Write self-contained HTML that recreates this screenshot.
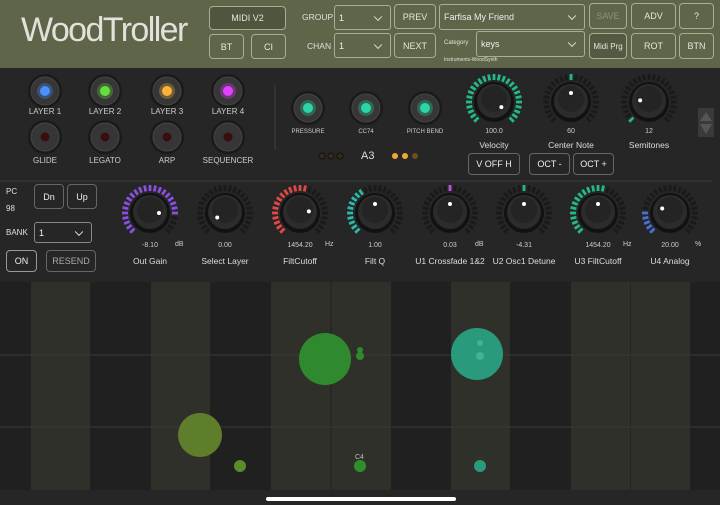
<!DOCTYPE html>
<html><head><meta charset="utf-8"><style>
*{box-sizing:border-box;margin:0;padding:0}
body{width:720px;height:505px;background:#262626;position:relative;overflow:hidden;font-family:"Liberation Sans",sans-serif;color:#ddd}
.a{position:absolute}
#hdr{left:0;top:0;width:720px;height:68px;background:#5e6549}
.b{position:absolute;border:1px solid #a9ae98;border-radius:4px;color:#e6e6dc;font-size:9px;display:flex;align-items:center;justify-content:center}
.s{position:absolute;border:1px solid #a9ae98;border-radius:3px;color:#eee;font-size:9px;display:flex;align-items:center;padding-left:4px}
.s:after{content:"";position:absolute;right:9px;top:50%;width:5px;height:5px;border-right:1.5px solid #ddd;border-bottom:1.5px solid #ddd;transform:translateY(-70%) rotate(45deg)}
.l{position:absolute;font-size:9px;color:#e0e0d8}
.t{position:absolute;font-size:7px;color:#ccc;text-align:center;width:80px;margin-left:-40px}
.n{position:absolute;font-size:8.5px;color:#ddd;text-align:center;width:90px;margin-left:-45px}
.db{position:absolute;border:1px solid #666;border-radius:4px;color:#eee;font-size:9px;display:flex;align-items:center;justify-content:center}
</style></head><body>
<div id="hdr" class="a">
<div class="a" style="left:21px;top:11px;font-size:34px;color:#e2e2da;letter-spacing:-1.6px;font-weight:100">WoodTroller</div>
<div class="b" style="left:209px;top:6px;width:77px;height:24px;background:#4f563d">MIDI V2</div>
<div class="b" style="left:209px;top:34px;width:35px;height:25px">BT</div>
<div class="b" style="left:251px;top:34px;width:35px;height:25px">CI</div>
<div class="l" style="left:302px;top:12px;font-size:8.5px">GROUP</div>
<div class="l" style="left:307px;top:41px;font-size:8.5px">CHAN</div>
<div class="s" style="left:334px;top:5px;width:57px;height:25px">1</div>
<div class="s" style="left:334px;top:33px;width:57px;height:25px">1</div>
<div class="b" style="left:394px;top:4px;width:42px;height:25px">PREV</div>
<div class="b" style="left:394px;top:33px;width:42px;height:25px">NEXT</div>
<div class="s" style="left:439px;top:4px;width:146px;height:26px">Farfisa My Friend</div>
<div class="l" style="left:444px;top:40px;font-size:6px">Category</div>
<div class="s" style="left:476px;top:31px;width:109px;height:26px">keys</div>
<div class="l" style="left:444px;top:57px;font-size:5px">Instruments-WoodSynth</div>
<div class="b" style="left:589px;top:3px;width:38px;height:26px;color:#8d927c">SAVE</div>
<div class="b" style="left:631px;top:3px;width:45px;height:26px">ADV</div>
<div class="b" style="left:679px;top:3px;width:35px;height:26px">?</div>
<div class="b" style="left:589px;top:33px;width:38px;height:26px;font-size:8px;background:#535a41">Midi Prg</div>
<div class="b" style="left:631px;top:33px;width:45px;height:26px">ROT</div>
<div class="b" style="left:679px;top:33px;width:35px;height:26px">BTN</div>
</div>
<svg class="a" style="left:0;top:0" width="720" height="505" id="sv"></svg>
<div id="txt"></div>
<div class="l" style="left:6px;top:187px;font-size:8px">PC</div>
<div class="l" style="left:6px;top:204px;font-size:8px">98</div>
<div class="db" style="left:34px;top:184px;width:30px;height:25px">Dn</div>
<div class="db" style="left:67px;top:184px;width:30px;height:25px">Up</div>
<div class="l" style="left:6px;top:228px;font-size:8px">BANK</div>
<div class="s" style="left:34px;top:222px;width:58px;height:21px;border-color:#888">1</div>
<div class="db" style="left:6px;top:250px;width:31px;height:22px;border-color:#999">ON</div>
<div class="db" style="left:46px;top:250px;width:50px;height:22px;color:#aaa">RESEND</div>
<div class="db" style="left:468px;top:153px;width:52px;height:22px">V OFF H</div>
<div class="db" style="left:529px;top:153px;width:41px;height:22px">OCT -</div>
<div class="db" style="left:573px;top:153px;width:41px;height:22px">OCT +</div>
<div class="l" style="left:361px;top:150px;font-size:11px;color:#ddd">A3</div>
<div class="l" style="left:355px;top:454px;font-size:7px;color:#bbb">C4</div>
<script>
(function(){
var sv=document.getElementById('sv'),h='',tx='';
h+='<rect x="0" y="282" width="720" height="208" fill="#202020"/>';
[[31,59],[151,59],[271,120],[451,59],[571,119]].forEach(function(s){h+='<rect x="'+s[0]+'" y="282" width="'+s[1]+'" height="208" fill="#30302b"/>';});
h+='<line x1="331" y1="282" x2="331" y2="490" stroke="#202020" stroke-width="1"/><line x1="630.5" y1="282" x2="630.5" y2="490" stroke="#262620"/>';
h+='<line x1="0" y1="355" x2="720" y2="355" stroke="#3a3a36"/><line x1="0" y1="427" x2="720" y2="427" stroke="#3a3a36"/>';
h+='<rect x="0" y="490" width="720" height="15" fill="#262626"/><rect x="266" y="497" width="190" height="4" rx="2" fill="#fff"/>';
h+='<circle cx="325" cy="359" r="26" fill="#2f8a2f"/><circle cx="360" cy="356" r="4" fill="#2f8a2f"/><circle cx="360" cy="350" r="3" fill="#2f8a2f"/>';
h+='<circle cx="477" cy="354" r="26" fill="#2a9a7c"/><circle cx="480" cy="356" r="4" fill="#3fb591"/><circle cx="480" cy="343" r="3" fill="#3fb591"/>';
h+='<circle cx="200" cy="435" r="22" fill="#5f7e2b"/><circle cx="240" cy="466" r="6" fill="#5f8a2b"/><circle cx="360" cy="466" r="6" fill="#2f8f2f"/><circle cx="480" cy="466" r="6" fill="#2a9a7c"/>';
h+='<line x1="0" y1="181" x2="712" y2="181" stroke="#3d3d3d"/><line x1="275" y1="85" x2="275" y2="150" stroke="#3d3d3d"/>';
function led(x,y,c,R){h+='<circle cx="'+x+'" cy="'+y+'" r="'+(R+3)+'" fill="#1a1a1a"/><circle cx="'+x+'" cy="'+y+'" r="'+R+'" fill="#363636" stroke="#444"/>';
 if(c)h+='<circle cx="'+x+'" cy="'+y+'" r="8" fill="'+c+'" opacity="0.3"/><circle cx="'+x+'" cy="'+y+'" r="5" fill="'+c+'"/>';
 else h+='<circle cx="'+x+'" cy="'+y+'" r="4.5" fill="#3a0e0e"/>';}
[[45,'#4a90ff','LAYER 1'],[105,'#66e040','LAYER 2'],[167,'#ffb23a','LAYER 3'],[228,'#e040ff','LAYER 4']].forEach(function(a){led(a[0],91,a[1],14);tx+='<div class="t" style="left:'+a[0]+'px;top:107px;font-size:8px">'+a[2]+'</div>';});
[[45,'GLIDE'],[105,'LEGATO'],[167,'ARP'],[228,'SEQUENCER']].forEach(function(a){led(a[0],137,null,14);tx+='<div class="t" style="left:'+a[0]+'px;top:156px;font-size:8px">'+a[1]+'</div>';});
[[308,'PRESSURE'],[366,'CC74'],[425,'PITCH BEND']].forEach(function(a){led(a[0],108,'#2ad6a6',14);tx+='<div class="t" style="left:'+a[0]+'px;top:129px;font-size:6px">'+a[1]+'</div>';});
[322,331,340].forEach(function(x){h+='<circle cx="'+x+'" cy="156" r="3" fill="#3a2a18" stroke="#111"/>';});
[[395,'#f0a830'],[405,'#f0a830'],[415,'#6a5020']].forEach(function(a){h+='<circle cx="'+a[0]+'" cy="156" r="3" fill="'+a[1]+'"/>';});
h+='<rect x="698" y="108" width="16" height="29" fill="#3a3a3a"/><path d="M700 121 L706 112 L712 121Z M700 124 L712 124 L706 134Z" fill="#555"/>';
function knob(cx,cy,a0,a1,col,p,val,name,unit){
 var R1=22,R2=28;for(var i=0;i<=24;i++){var a=-135+i*270/24,r=a*Math.PI/180;var on=col&&a>=a0-0.1&&a<=a1+0.1;
 h+='<line x1="'+(cx+R1*Math.sin(r))+'" y1="'+(cy-R1*Math.cos(r))+'" x2="'+(cx+R2*Math.sin(r))+'" y2="'+(cy-R2*Math.cos(r))+'" stroke="'+(on?col:'#1a1a1a')+'" stroke-width="2.8"/>';}
 h+='<circle cx="'+cx+'" cy="'+cy+'" r="20" fill="#121212"/><circle cx="'+cx+'" cy="'+(cy-1)+'" r="17" fill="#2c2c2c"/><circle cx="'+cx+'" cy="'+(cy-3)+'" r="13" fill="#242424"/>';
 var pr=p*Math.PI/180;h+='<circle cx="'+(cx+9*Math.sin(pr))+'" cy="'+(cy-9*Math.cos(pr))+'" r="2" fill="#fff"/>';
 return [cx,cy,val,name,unit];}
var tk=[knob(494,102,-135,135,'#22b88a',125,'100.0','Velocity'),knob(571,102,0,0,'#22b88a',0,'60','Center Note'),knob(649,102,-135,-135,'#22b88a',-80,'12','Semitones')];
tk.forEach(function(k){tx+='<div class="t" style="left:'+k[0]+'px;top:128px">'+k[2]+'</div><div class="n" style="left:'+k[0]+'px;top:140px">'+k[3]+'</div>';});
var bk=[knob(150,213,-135,100,'#8a4fe0',90,'-8.10','Out Gain','dB'),knob(225,213,0,-1,null,-120,'0.00','Select Layer'),knob(300,213,-135,20,'#e04848',80,'1454.20','FiltCutoff','Hz'),knob(375,213,-135,-30,'#2ab8a8',0,'1.00','Filt Q'),knob(450,213,0,0,'#c050e0',0,'0.03','U1 Crossfade 1&amp;2','dB'),knob(524,213,0,0,'#22b88a',0,'-4.31','U2 Osc1 Detune'),knob(598,213,-135,20,'#22b88a',0,'1454.20','U3 FiltCutoff','Hz'),knob(670,213,-135,-90,'#4a70d8',-60,'20.00','U4 Analog','%')];
bk.forEach(function(k){tx+='<div class="t" style="left:'+k[0]+'px;top:242px">'+k[2]+'</div><div class="n" style="left:'+k[0]+'px;top:256px">'+k[3]+'</div>';if(k[4])tx+='<div class="t" style="left:'+(k[0]+25)+'px;top:241px;width:20px;margin-left:0;text-align:left">'+k[4]+'</div>';});
sv.innerHTML=h;document.getElementById('txt').innerHTML=tx;
})();
</script>
</body></html>
